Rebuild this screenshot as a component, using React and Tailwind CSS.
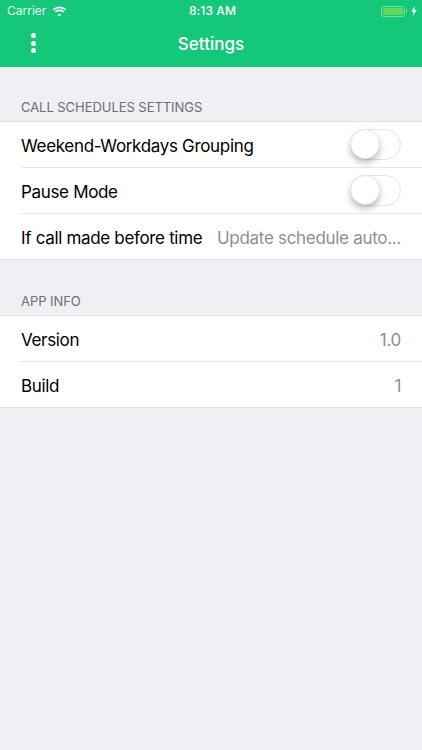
const font = { fontFamily: 'Inter, "Liberation Sans", sans-serif' };

function Toggle() {
  return (
    <span className="relative block h-[31px] w-[51px] rounded-full border border-[#e5e5e5] bg-white">
      <span className="absolute left-[-1px] top-[-1px] h-[30px] w-[30px] rounded-full border border-[#e3e3e3] bg-white shadow-[0_4px_6px_rgba(0,0,0,0.25)]" />
    </span>
  );
}

function Row({ label, value, toggle, last }) {
  return (
    <div className="pl-[21px]">
      <div className={`flex items-center pr-[21px] ${last ? 'h-[45px]' : 'h-[46px] border-b border-[#e6e6e9]'}`}>
        <span className="pt-[4px] text-[17px] tracking-[-0.33px] text-black">{label}</span>
        <span className="flex-1" />
        {toggle ? <Toggle /> : <span className="pt-[4px] text-[17px] tracking-[-0.3px] text-[#8e8e93]">{value}</span>}
      </div>
    </div>
  );
}

function Section({ title, children }) {
  return (
    <section>
      <h2 className="px-[21px] pb-[6px] text-[13px] font-normal leading-[16px] tracking-[-0.05px] text-[#6d6d72]">{title}</h2>
      <div className="border-y border-[#dfdfe3] bg-white">{children}</div>
    </section>
  );
}

export default function App() {
  return (
    <div className="h-[750px] w-[422px] overflow-hidden bg-[#efeff4]" style={font}>
      <header className="h-[67px] bg-[#15c778] text-white">
        <div className="flex h-[22px] items-center pl-[7px] pr-[5px] text-[12px]">
          <div className="flex flex-1 items-center gap-[6px]">
            <span className="opacity-90">Carrier</span>
            <svg width="15" height="11" viewBox="0 0 15 11" fill="white">
              <path d="M7.5 2.3c2.2 0 4.2.9 5.7 2.3l1.200-1.300A10 10 0 0 0 7.500.500 10 10 0 0 0 .600 3.300l1.200 1.300a8.200 8.200 0 0 1 5.700-2.300z" />
              <path d="M7.500 5.200c1.400 0 2.600.500 3.600 1.400l1.200-1.300a7 7 0 0 0-9.600 0l1.200 1.300c1-.900 2.200-1.400 3.600-1.400z" />
              <path d="M7.500 8c-.700 0-1.300.300-1.800.700l1.800 1.900 1.800-1.900c-.500-.400-1.100-.700-1.800-.700z" />
            </svg>
          </div>
          <span className="pl-[1px] font-medium tracking-[0.1px]">8:13 AM</span>
          <div className="flex flex-1 items-center justify-end gap-[4px]">
            <span className="flex items-center">
              <span className="block h-[11px] w-[24px] rounded-[2.5px] border border-[#7fe08a] p-[1px]">
                <span className="block h-full w-full rounded-[1px] bg-[#62da60]" />
              </span>
              <span className="ml-[1px] block h-[4px] w-[1px] bg-[#7fe08a]" />
            </span>
            <svg width="6" height="10" viewBox="0 0 6 10" fill="white">
              <path d="M3.700 0 .300 5.600h2.200L1.900 10l3.800-6H3.300z" />
            </svg>
          </div>
        </div>
        <div className="relative flex h-[45px] items-center justify-center">
          <div className="absolute left-[30.5px] top-[11px] flex flex-col gap-[2.5px]">
            <span className="h-[5px] w-[5px] rounded-full bg-white" />
            <span className="h-[5px] w-[5px] rounded-full bg-white" />
            <span className="h-[5px] w-[5px] rounded-full bg-white" />
          </div>
          <h1 className="text-[17px] font-medium">Settings</h1>
        </div>
      </header>
      <main className="flex flex-col gap-[33px] pt-[32px]">
        <Section title="CALL SCHEDULES SETTINGS">
          <Row label="Weekend-Workdays Grouping" toggle />
          <Row label="Pause Mode" toggle />
          <Row label="If call made before time" value="Update schedule auto..." last />
        </Section>
        <Section title="APP INFO">
          <Row label="Version" value="1.0" />
          <Row label="Build" value="1" last />
        </Section>
      </main>
    </div>
  );
}
